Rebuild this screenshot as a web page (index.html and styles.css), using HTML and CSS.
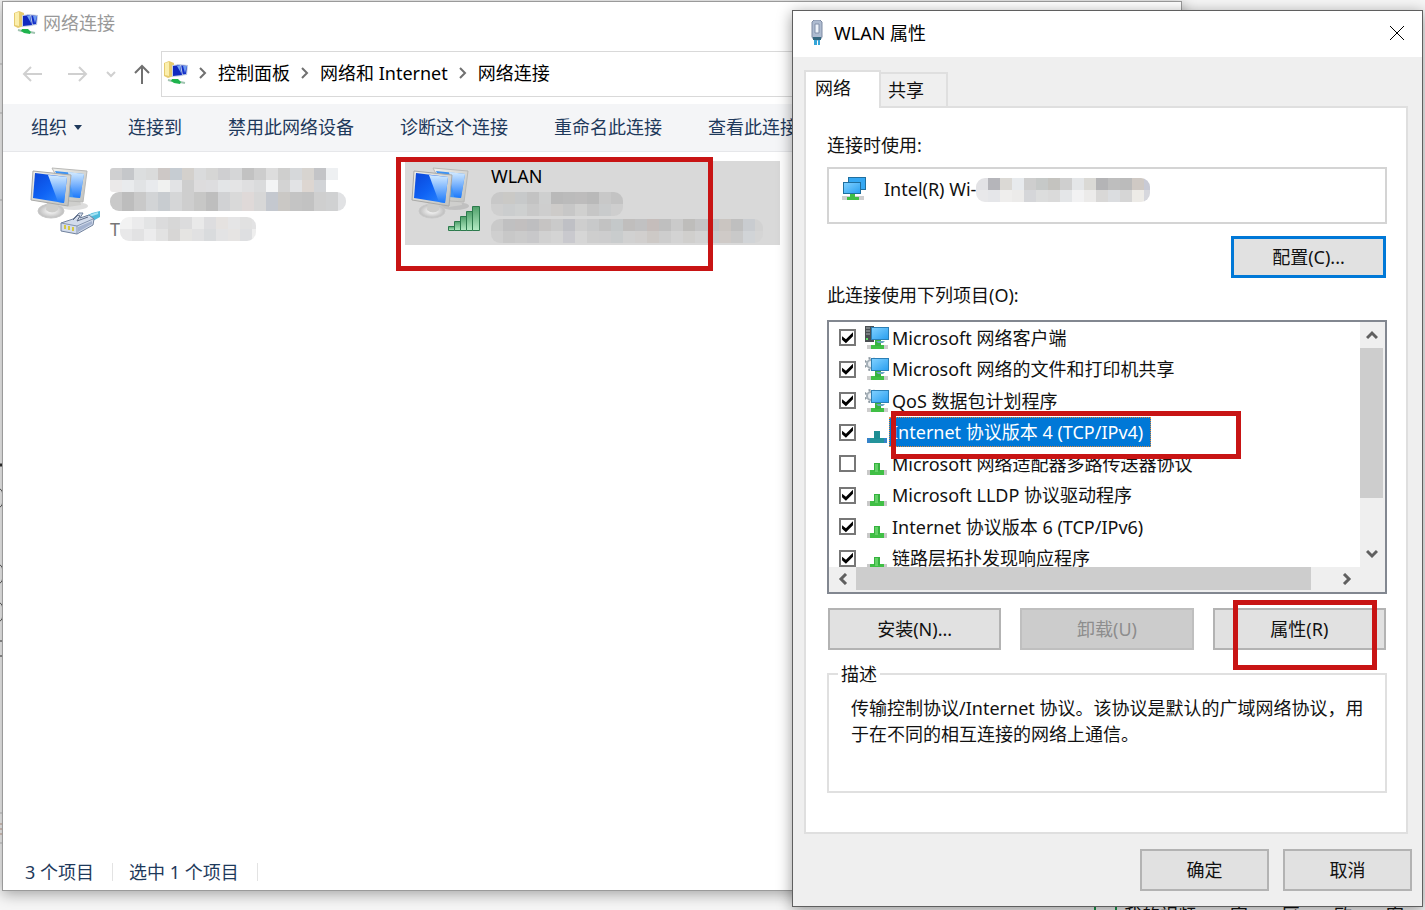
FILE: index.html
```
<!DOCTYPE html>
<html lang="zh-CN">
<head>
  <meta charset="UTF-8">
  <meta name="viewport" content="width=device-width, initial-scale=1.0">
  <title>网络连接</title>
  <link rel="stylesheet" href="styles.css">
</head>
<body>
  <!-- Icônes communes -->
  <svg class="defs" width="0" height="0" aria-hidden="true">
    <defs>
      <linearGradient id="screen" x1="0" y1="0" x2="1" y2="1">
        <stop offset="0" stop-color="#0b45d8"/>
        <stop offset="0.5" stop-color="#0f63f5"/>
        <stop offset="1" stop-color="#2f8cff"/>
      </linearGradient>
      <linearGradient id="glare" x1="0" y1="0" x2="0" y2="1">
        <stop offset="0" stop-color="#d4ebff"/>
        <stop offset="1" stop-color="#1a78fb"/>
      </linearGradient>
      <linearGradient id="frame" x1="0" y1="0" x2="1" y2="1">
        <stop offset="0" stop-color="#f0f0ec"/>
        <stop offset="1" stop-color="#bfc0bd"/>
      </linearGradient>
      <linearGradient id="sky" x1="0" y1="0" x2="1" y2="1">
        <stop offset="0" stop-color="#7fd0ff"/>
        <stop offset="1" stop-color="#2ba0f0"/>
      </linearGradient>
      <linearGradient id="bars" x1="0" y1="0" x2="0" y2="1">
        <stop offset="0" stop-color="#4fa06a"/>
        <stop offset="1" stop-color="#b4ecc4"/>
      </linearGradient>
      <radialGradient id="foot">
        <stop offset="0" stop-color="#ffffff"/>
        <stop offset="1" stop-color="#bdbdbd"/>
      </radialGradient>
      <symbol id="monitors" viewBox="0 0 60 56">
        <ellipse cx="44" cy="39" rx="14" ry="4" fill="#777" opacity="0.25"/>
        <path d="M38 32l12 1 1 5-13 2z" fill="#cfcfcd"/>
        <path d="M22 1l35 3-4 31-14-1z" fill="url(#frame)" stroke="#b9b9b7"/>
        <path d="M25 4l29 3-4 24-12-1z" fill="#3d93f5"/>
        <path d="M38 5l16 2-4 24-7-1z" fill="url(#glare)"/>
        <ellipse cx="21" cy="44" rx="13" ry="7" fill="url(#foot)" stroke="#c9c9c9"/>
        <path d="M17 34l11 3 0 6q-6 5-12 0z" fill="#cdcdcb"/>
        <path d="M3 4l38 4-3 31-37-6z" fill="url(#frame)" stroke="#a9a9a7"/>
        <path d="M5 6l32 4-3 26L3 31z" fill="url(#screen)"/>
        <path d="M18 8l19 2-3 26-6-1z" fill="url(#glare)"/>
      </symbol>
      <symbol id="folder-net" viewBox="0 0 24 24">
        <path d="M0 2l5-2 5 2v13l-6 2-4-2z" fill="#e6cb6f"/>
        <path d="M1 2l4-1v14l-4-1z" fill="#fbefad"/>
        <path d="M13 3l11 1-1 10-10 1z" fill="#b9c6df"/>
        <path d="M14 4l9 1-1 8-8 1z" fill="#1531c9"/>
        <path d="M8 4l9-1 2 12-11 1z" fill="#c4cfe6"/>
        <path d="M9 5l7-1 2 10-9 1z" fill="#1029c0"/>
        <path d="M13 5l3-1 1 8z" fill="#72a3f4"/>
        <path d="M19 5h4l-2 7z" fill="#6f9cf1"/>
        <path d="M4 19l4 1M16 21l5 1" stroke="#a0c4b0" stroke-width="2"/>
        <path d="M8 18l6 0 3 3-1 2-6-1-3-2z" fill="#1fb34d"/>
      </symbol>
      <symbol id="proto" viewBox="0 0 24 24">
        <path d="M2 18h20v5H2z" fill="#c9c9c9"/>
        <path d="M5 18h14v5H5z" fill="#40bf45"/>
        <path d="M9 11h6v8H9z" fill="#35b23e"/>
        <path d="M10 12h3v8h-3z" fill="#63d167"/>
      </symbol>
      <symbol id="proto-on" viewBox="0 0 24 24">
        <path d="M2 18h20v5H2z" fill="#3583c9"/>
        <path d="M5 18h14v5H5z" fill="#23949b"/>
        <path d="M9 11h6v8H9z" fill="#1e8e93"/>
      </symbol>
      <symbol id="pc" viewBox="0 0 24 24">
        <path d="M2 19h21v4H2z" fill="#cdcdcd"/>
        <path d="M6 19h13v4H6z" fill="#40bf45"/>
        <path d="M10 14h6v6h-6z" fill="#37b43f"/>
        <path d="M6 1h18v13H6z" fill="#2b7fb5"/>
        <path d="M7 2h16v11H7z" fill="url(#sky)"/>
        <path d="M11 15h9l-2 2h-5z" fill="#69a6bd"/>
      </symbol>
      <symbol id="client" viewBox="0 0 24 24">
        <path d="M0 0h9v16H0z" fill="#4a4f52"/>
        <path d="M1 2h4M1 5h4M1 8h4" stroke="#a8b0b2"/>
        <path d="M1 12h2v2H1z" fill="#5fe36b"/>
        <use href="#pc"/>
      </symbol>
      <symbol id="service" viewBox="0 0 24 24">
        <circle cx="6" cy="7" r="4" fill="#e9edf0" stroke="#a4afb7" stroke-width="2"/>
        <circle cx="6" cy="7" r="6" fill="none" stroke="#8c98a1" stroke-width="2" stroke-dasharray="2 3"/>
        <use href="#pc"/>
      </symbol>
      <symbol id="crumb" viewBox="0 0 8 12">
        <path d="M1 1l5 5-5 5" fill="none" stroke="#707070" stroke-width="2"/>
      </symbol>
      <symbol id="chev" viewBox="0 0 12 12">
        <path d="M1 9l5-5 5 5" fill="none" stroke="#606060" stroke-width="3"/>
      </symbol>
    </defs>
  </svg>

  <!-- Ce qui dépasse derrière les fenêtres -->
  <svg class="left-edge" width="3" height="910" aria-hidden="true">
    <path d="M0 64h3M0 113h3M0 200h3M0 813h3M0 843h3" stroke="#bbb"/>
    <path d="M0 465h3" stroke="#333" stroke-width="3"/>
    <path d="M0 489q3 1 3 9t-3 9M0 565q3 1 3 9t-3 9M0 603q3 1 3 9t-3 9" fill="none" stroke="#555"/>
    <path d="M0 641h3M0 656h3" stroke="#333"/>
    <path d="M0 824h3M0 829h3M0 834h3" stroke="#c09a8a"/>
  </svg>
  <div class="behind">
    <span class="play"></span>
    <span>我的视频</span><span>字</span><span>区</span><span>欧</span><span>客</span>
  </div>

  <!-- Fenêtre principale -->
  <main class="window explorer">
    <header class="title-bar">
      <svg class="icon-24"><use href="#folder-net"/></svg>
      <span>网络连接</span>
    </header>

    <nav class="nav-row">
      <button class="nav-btn" aria-label="后退"><svg width="20" height="16"><path d="M20 8H2M9 1L2 8l7 7" fill="none" stroke="#d0d0d0" stroke-width="2"/></svg></button>
      <button class="nav-btn" aria-label="前进"><svg width="20" height="16"><path d="M0 8h18M11 1l7 7-7 7" fill="none" stroke="#d0d0d0" stroke-width="2"/></svg></button>
      <button class="nav-btn small" aria-label="最近"><svg width="10" height="8"><path d="M1 2l4 4 4-4" fill="none" stroke="#d0d0d0" stroke-width="2"/></svg></button>
      <button class="nav-btn" aria-label="上移"><svg width="16" height="20"><path d="M8 20V2M1 9l7-7 7 7" fill="none" stroke="#707070" stroke-width="2"/></svg></button>
      <div class="address">
        <svg class="icon-24"><use href="#folder-net"/></svg>
        <svg class="crumb"><use href="#crumb"/></svg>
        <a href="#">控制面板</a>
        <svg class="crumb"><use href="#crumb"/></svg>
        <a href="#">网络和 Internet</a>
        <svg class="crumb"><use href="#crumb"/></svg>
        <a href="#">网络连接</a>
      </div>
    </nav>

    <div class="toolbar">
      <button>组织<i class="caret"></i></button>
      <button>连接到</button>
      <button>禁用此网络设备</button>
      <button>诊断这个连接</button>
      <button>重命名此连接</button>
      <button>查看此连接的状态</button>
    </div>

    <section class="connections">
      <article class="connection">
        <div class="conn-icon">
          <svg class="monitors"><use href="#monitors"/></svg>
          <svg class="overlay plug" viewBox="0 0 40 26">
            <path d="M26 6l6-3 8-2v6l-9 5z" fill="#4fbbdb"/>
            <path d="M29 6l9-3" stroke="#a5e2f2" stroke-width="2"/>
            <path d="M1 13l12-4 6-6 4 0-3 5 9-3 5 4-1 6-16 9-16-3z" fill="#d3dcec" stroke="#71829d"/>
            <path d="M1 13l16 3 16-7M17 16v8" fill="none" stroke="#8595b0"/>
            <path d="M18 17l14-6v3l-14 8z" fill="#a3b2cf"/>
            <path d="M4 15h2v4H4zM8 16h2v4H8zM12 17h2v4h-2z" fill="#d6c843"/>
            <path d="M13 10l5-5 2 1-3 5 11-4" fill="none" stroke="#5d6b85"/>
          </svg>
        </div>
        <div class="conn-text">
          <svg class="mosaic wide" data-width="230" data-top="#d0d0d1 #c5c7ca #dcdedf #dadbdb #cdc8c6 #c6ccd2 #d3d0cc #dadbdc #d6d6d5 #cfcfd1 #d5d6d7 #c2c2c2 #cdcdcd #dddddd #cfcfce #d6d8da #d7d4d0 #c3c4c7 #eef0f2" data-bottom="#ebe9e9 #e9ebed #e1e3e5 #e8eaed #f0f1f0 #e2e3e5 #cecece #dddcdd #dddddf #e3e5e7 #e4e4e5 #dfdfe0 #dadbdc #f3f4f5 #d3d3d3 #e2e3e5 #ddd6d1 #d2d4d7 #ffffff"></svg>
          <svg class="mosaic" data-width="236" data-top="#c9c9c9 #bdbdbd #c9c9c9 #d2d4d6 #c8ccd0 #d5d6d7 #cecece #c7c7c6 #bebebe #d1d2d4 #d9d9d9 #dfd9d8 #d7d7d7 #c4c8cf #cac8c5 #c4c4c4 #c2c2c2 #cfcfcf #d0d1d2 #e1e2e4"></svg>
          <span class="conn-sub">T<svg class="mosaic" data-width="136" data-top="#f2f2f2 #ebebec #e3e4e5 #dbdbdc #d7d7d7 #dcdcdd #e9e9e9 #dddddf #e5e2e0 #e5e5e6 #e1e1e1 #e3e3e4" data-bottom="#e8e8e9 #e2e2e3 #ececed #e2e2e2 #d7d6d5 #e5e4e2 #e1e1e2 #d9dbdd #e3e3e4 #e6e4e3 #dedfe1 #eeeeee"></svg></span>
        </div>
      </article>

      <article class="connection selected">
        <div class="conn-icon">
          <svg class="monitors"><use href="#monitors"/></svg>
          <svg class="overlay signal" viewBox="0 0 32 25" fill="url(#bars)" stroke="#2d7a4d">
            <path d="M0.5 20.500h6v4h-6z"/>
            <path d="M6.500 15.500h6v9h-6z"/>
            <path d="M12.500 10.500h6v14h-6z"/>
            <path d="M18.500 5.500h6v19h-6z"/>
            <path d="M24.500 0.500h7v24h-7z"/>
          </svg>
        </div>
        <div class="conn-text">
          <span>WLAN</span>
          <svg class="mosaic" data-width="132" data-top="#c8c8c8 #cac9c6 #c7c9ca #c3c3c3 #cecfcf #b9b9b9 #bbbbbb #bdbcbc #b9b9b9 #c8c8c8 #c3c3c3" data-bottom="#cfcfcf #cbcdce #ced0d0 #c9c9c9 #cecece #cdcbc9 #c7c7c7 #d0d0cf #c6c6c6 #c9cbcc #cecece"></svg>
          <svg class="mosaic" data-width="272" data-top="#cacaca #c0c0c1 #c2bfbf #bebec0 #c6c4c3 #cacaca #bfc0c5 #cecece #c8c9ca #c2c2c2 #c4c8c9 #c0bebd #c1c1c2 #c5bdbb #bfbfbf #cacaca #bebdbb #c4c4c5 #c1c3c6 #cac5c1 #bfbfbf #c9ccd0 #d2d2d2" data-bottom="#cfcfcf #c8c8c8 #cbcbcb #c8c8ca #d1d1d1 #d4d4d4 #c9c9ce #d6d6d6 #cecece #cdcdce #c9cccd #d1d1d1 #d1cfce #cdc9c6 #cdcdcd #d3d3d3 #d0cfcd #d3d3d3 #c9cbcd #cfcac7 #c9c9c9 #d1d4d7 #d5d5d5"></svg>
        </div>
      </article>
    </section>

    <footer class="status-bar">
      <span>3 个项目</span>
      <span>选中 1 个项目</span>
    </footer>
  </main>

  <!-- Boîte de dialogue WLAN -->
  <div class="window dialog" role="dialog" aria-labelledby="dialog-title">
    <header class="dialog-title">
      <svg width="14" height="26" viewBox="0 0 14 26">
        <path d="M2 2l2-2h6l2 2v15l-2 3H4l-2-3z" fill="#aebbd0" stroke="#7e8ba3"/>
        <path d="M5 4h4v9H5z" fill="#eef3fa" stroke="#8290aa"/>
        <path d="M3 17h8v3H3z" fill="#33677f"/>
        <path d="M4 20h3v5H4zM8 20h2v5H8z" fill="#35a5d8"/>
      </svg>
      <span id="dialog-title">WLAN 属性</span>
      <button class="close" aria-label="关闭"><svg width="16" height="16"><path d="M1 1l14 14M15 1L1 15" stroke="#000"/></svg></button>
    </header>

    <div class="dialog-body">
      <div class="tabs" role="tablist">
        <button class="tab active" role="tab" aria-selected="true">网络</button>
        <button class="tab" role="tab" aria-selected="false">共享</button>
      </div>

      <div class="panel" role="tabpanel">
        <p class="label">连接时使用:</p>
        <div class="adapter">
          <svg width="25" height="25" viewBox="0 0 25 25">
            <path d="M7 1h18v13H7z" fill="#1f6f9f"/><path d="M8 2h16v11H8z" fill="#35a8f3"/>
            <path d="M1 20h22v4H1z" fill="#cfcfcf"/>
            <path d="M2 6h18v12H2z" fill="#1f6f9f"/><path d="M3 7h16v10H3z" fill="url(#sky)"/>
            <path d="M9 18h5v3h4v3H6v-3h3z" fill="#3fbe46"/>
          </svg>
          <span>Intel(R) Wi-</span>
          <svg class="mosaic" data-width="174" data-top="#e2e2e5 #b5b5ba #dbd9d5 #e7eaed #cecece #c6c9c8 #c4c3bf #cfcfcf #e4e6e8 #dad9d5 #b4b4b6 #bebebe #bbbbbb #cfc9c4 #c8cad5" data-bottom="#e8e8ea #e5e6e9 #efeeed #ecebea #d5d6d9 #dcdddd #dadada #e4e6e8 #f2f2f3 #ecebea #d9d8d7 #dbdde0 #d6d6d6 #edebe7 #d6d7dd"></svg>
        </div>
        <button class="btn configure">配置(C)...</button>

        <p class="label items-label">此连接使用下列项目(O):</p>
        <div class="list-box">
          <ul class="items">
            <li><input type="checkbox" id="i1" checked><svg class="icon-24"><use href="#client"/></svg><label for="i1">Microsoft 网络客户端</label></li>
            <li><input type="checkbox" id="i2" checked><svg class="icon-24"><use href="#service"/></svg><label for="i2">Microsoft 网络的文件和打印机共享</label></li>
            <li><input type="checkbox" id="i3" checked><svg class="icon-24"><use href="#service"/></svg><label for="i3">QoS 数据包计划程序</label></li>
            <li class="current"><input type="checkbox" id="i4" checked><svg class="icon-24"><use href="#proto-on"/></svg><label for="i4">Internet 协议版本 4 (TCP/IPv4)</label></li>
            <li><input type="checkbox" id="i5"><svg class="icon-24"><use href="#proto"/></svg><label for="i5">Microsoft 网络适配器多路传送器协议</label></li>
            <li><input type="checkbox" id="i6" checked><svg class="icon-24"><use href="#proto"/></svg><label for="i6">Microsoft LLDP 协议驱动程序</label></li>
            <li><input type="checkbox" id="i7" checked><svg class="icon-24"><use href="#proto"/></svg><label for="i7">Internet 协议版本 6 (TCP/IPv6)</label></li>
            <li><input type="checkbox" id="i8" checked><svg class="icon-24"><use href="#proto"/></svg><label for="i8">链路层拓扑发现响应程序</label></li>
          </ul>
          <div class="scroll-v">
            <svg class="chev"><use href="#chev"/></svg>
            <div class="thumb"></div>
            <svg class="chev down"><use href="#chev"/></svg>
          </div>
          <div class="scroll-h">
            <svg class="chev left"><use href="#chev"/></svg>
            <div class="thumb"></div>
            <svg class="chev right"><use href="#chev"/></svg>
          </div>
        </div>

        <div class="actions">
          <button class="btn">安装(N)...</button>
          <button class="btn" disabled>卸载(U)</button>
          <button class="btn">属性(R)</button>
        </div>

        <fieldset class="description">
          <legend>描述</legend>
          <p>传输控制协议/Internet 协议。该协议是默认的广域网络协议，用于在不同的相互连接的网络上通信。</p>
        </fieldset>
      </div>

      <div class="dialog-footer">
        <button class="btn">确定</button>
        <button class="btn">取消</button>
      </div>
    </div>
  </div>

  <!-- Cadres rouges -->
  <div class="marker marker-wlan"></div>
  <div class="marker marker-ipv4"></div>
  <div class="marker marker-props"></div>

  <script>
    // Dessine les zones pixelisées à partir des couleurs
    const NS = "http://www.w3.org/2000/svg";
    const cell = 12;

    document.querySelectorAll(".mosaic").forEach((svg) => {
      const rows = [svg.dataset.top, svg.dataset.bottom].filter(Boolean);
      svg.setAttribute("width", svg.dataset.width);
      svg.setAttribute("height", rows.length === 1 ? 19 : 24);
      rows.forEach((row, y) => {
        row.split(" ").forEach((color, x) => {
          const rect = document.createElementNS(NS, "rect");
          rect.setAttribute("x", x * cell);
          rect.setAttribute("y", y * cell);
          rect.setAttribute("width", cell);
          rect.setAttribute("height", rows.length === 1 ? 19 : cell);
          rect.setAttribute("fill", color);
          svg.appendChild(rect);
        });
      });
    });
  </script>
</body>
</html>
```
FILE: styles.css
```
/* Style global */
* {
  box-sizing: border-box;
}

body {
  margin: 0;
  height: 100vh;
  overflow: hidden;
  position: relative;
  background: #f6f6f6;
  font-family: "Noto Sans", "Noto Sans CJK SC", sans-serif;
  font-size: 18px;
  line-height: 26px;
  color: #111;
}

button {
  font: inherit;
  color: inherit;
  background: none;
  border: none;
  padding: 0;
  white-space: nowrap;
}

a {
  color: inherit;
  text-decoration: none;
}

p, ul {
  margin: 0;
  padding: 0;
}

svg {
  display: block;
  flex: none;
}

.defs {
  position: absolute;
}

.icon-24 {
  width: 24px;
  height: 24px;
}

.mosaic {
  border-radius: 9px;
}

.mosaic.wide {
  border-radius: 3px;
}

/* Arrière-plan */
.left-edge {
  position: absolute;
  left: 0;
  top: 0;
}

.behind {
  position: absolute;
  right: 21px;
  bottom: -18px;
  display: flex;
  gap: 34px;
}

.play {
  width: 23px;
  height: 24px;
  margin-right: -27px;
  border: 2px solid #1a9a4c;
}

/* Fenêtres */
.window {
  position: absolute;
  display: flex;
  flex-direction: column;
  background: white;
}

.explorer {
  left: 2px;
  right: 243px;
  top: 1px;
  bottom: 19px;
  border: 1px solid #9a9a9a;
  box-shadow: 0 3px 14px rgba(0, 0, 0, 0.35);
}

.title-bar {
  display: flex;
  align-items: center;
  gap: 5px;
  height: 43px;
  padding: 0 0 1px 11px;
  color: #999;
}

.nav-row {
  display: flex;
  align-items: center;
  height: 59px;
  padding: 0 0 1px 19px;
}

.nav-btn {
  display: flex;
  margin-right: 26px;
}

.nav-btn.small {
  margin: 0 18px 0 -8px;
}

.nav-btn:nth-child(4) {
  margin-right: 11px;
}

.address {
  flex: 1;
  display: flex;
  align-items: center;
  gap: 11px;
  height: 46px;
  margin-right: 12px;
  padding: 0 0 2px 2px;
  border: 1px solid #d9d9d9;
  color: #000;
}

.crumb {
  width: 8px;
  height: 12px;
}

.toolbar {
  display: flex;
  align-items: center;
  gap: 46px;
  height: 48px;
  padding: 0 0 2px 28px;
  background: #f4f5f7;
  border-bottom: 1px solid #e6e7ea;
  color: #1e395b;
  overflow: hidden;
}

.caret {
  display: inline-block;
  margin-left: 7px;
  vertical-align: 4px;
  border: 4px solid transparent;
  border-top: 5px solid #1e395b;
  border-bottom: none;
}

.connections {
  flex: 1;
  display: flex;
  align-items: flex-start;
  gap: 6px;
  padding: 9px 21px;
}

.connection {
  display: flex;
  gap: 10px;
  width: 375px;
  height: 84px;
  padding: 2px 6px;
}

.connection.selected {
  background: #d9d9d9;
  color: #000;
}

.conn-icon {
  position: relative;
  width: 70px;
}

.monitors {
  width: 60px;
  height: 56px;
  margin-top: 4px;
}

.overlay {
  position: absolute;
}

.plug {
  right: 0;
  bottom: 7px;
  width: 40px;
  height: 26px;
}

.signal {
  right: 1px;
  bottom: 12px;
  width: 32px;
  height: 25px;
}

.conn-text {
  display: flex;
  flex-direction: column;
  gap: 3px;
}

.connection:first-child .conn-text {
  padding-top: 5px;
  gap: 0;
}

.conn-sub {
  display: flex;
  align-items: center;
  padding-top: 5px;
  color: #777;
}

/* Barre d'état */
.status-bar {
  display: flex;
  align-items: center;
  height: 37px;
  padding-left: 22px;
  color: #1e395b;
}

.status-bar span {
  padding-right: 18px;
  margin-right: 16px;
  line-height: 18px;
  border-right: 1px solid #e3e3e3;
}

/* Boîte de dialogue */
.dialog {
  left: 792px;
  right: 2px;
  top: 10px;
  bottom: 3px;
  border: 1px solid #5f5f5f;
  background: #efefef;
  box-shadow: 0 3px 14px rgba(0, 0, 0, 0.4);
}

.dialog-title {
  display: flex;
  align-items: center;
  gap: 10px;
  height: 46px;
  padding: 0 17px 2px;
  background: white;
  color: #000;
}

.close {
  margin-left: auto;
}

.dialog-body {
  flex: 1;
  display: flex;
  flex-direction: column;
  padding: 13px 14px 15px 11px;
}

.tabs {
  display: flex;
  align-items: flex-end;
}

.tab {
  height: 34px;
  width: 67px;
  padding: 0 0 0 7px;
  text-align: left;
  border: 2px solid #dfdfdf;
  border-left: none;
  border-bottom: none;
}

.tab.active {
  position: relative;
  width: 77px;
  height: 38px;
  padding: 0 0 4px 9px;
  margin-bottom: -2px;
  background: white;
  border-left: 2px solid #dfdfdf;
}

.panel {
  flex: 1;
  display: flex;
  flex-direction: column;
  padding: 24px 19px 0 21px;
  background: white;
  border: 2px solid #dfdfdf;
}

.adapter {
  display: flex;
  height: 57px;
  margin-top: 9px;
  padding: 7px 12px;
  border: 2px solid #d4d4d4;
}

.adapter span {
  margin-left: 18px;
}

.adapter .mosaic {
  margin-top: 2px;
}

.btn {
  height: 42px;
  background: #e1e1e1;
  border: 2px solid #b3b3b3;
}

.btn:disabled {
  background: #ccc;
  border-color: #bfbfbf;
  color: #8d8d8d;
}

.configure {
  align-self: flex-end;
  width: 155px;
  margin: 12px 1px 0 0;
  border: 3px solid #0078d7;
}

.items-label {
  margin-top: 4px;
}

.list-box {
  display: grid;
  grid-template-columns: 1fr 25px;
  grid-template-rows: 245px 25px;
  height: 274px;
  margin-top: 12px;
  border: 2px solid #828790;
}

.items {
  display: grid;
  grid-auto-rows: 1fr;
  height: 252px;
  list-style: none;
  clip-path: inset(0 0 7px 0);
}

.items li {
  display: flex;
  align-items: center;
  padding-left: 10px;
}

.items input {
  appearance: none;
  width: 17px;
  height: 17px;
  margin: 0 9px 0 0;
  border: 2px solid #777;
  background: white;
}

.items input:checked::before {
  content: "";
  display: block;
  width: 13px;
  height: 13px;
  background: #000;
  clip-path: polygon(8% 38%, 38% 62%, 92% 8%, 92% 38%, 38% 92%, 8% 66%);
}

.items label {
  line-height: 30px;
  padding: 0 8px 0 3px;
}

.current label {
  background: #0078d7;
  color: white;
  outline: 1px dotted #e08a3c;
  outline-offset: -1px;
}

.scroll-v {
  display: flex;
  flex-direction: column;
  align-items: center;
  padding-right: 2px;
  background: #efefef;
}

.chev {
  width: 12px;
  height: 12px;
}

.scroll-v .chev {
  margin: 7px 0;
}

.scroll-v .thumb {
  width: 100%;
  height: 150px;
  background: #cdcdcd;
}

.scroll-v .down {
  margin-top: auto;
  transform: rotate(180deg);
}

.scroll-h {
  grid-column: 1 / 3;
  display: flex;
  align-items: center;
  padding: 0 32px 2px 8px;
  background: #efefef;
}

.scroll-h .thumb {
  flex: 1;
  height: 100%;
  margin: 0 30px 0 7px;
  background: #cdcdcd;
}

.left {
  transform: rotate(-90deg);
}

.right {
  transform: rotate(90deg);
}

.actions {
  display: flex;
  gap: 19px;
  margin: 14px 1px 0;
}

.actions .btn {
  flex: 1;
}

.description {
  height: 132px;
  margin: 11px 0 0;
  padding: 8px 16px 0 22px;
  border: 2px solid #e0e0e0;
}

.description legend {
  margin-left: -13px;
  padding: 0 3px;
}

.dialog-footer {
  display: flex;
  justify-content: flex-end;
  gap: 14px;
  margin: 15px -4px 0 0;
}

.dialog-footer .btn {
  width: 129px;
}

/* Cadres rouges */
.marker {
  position: absolute;
  border: 5px solid #c81414;
  pointer-events: none;
}

.marker-wlan {
  left: 396px;
  top: 157px;
  width: 317px;
  height: 114px;
}

.marker-ipv4 {
  left: 891px;
  top: 411px;
  width: 350px;
  height: 48px;
}

.marker-props {
  left: 1233px;
  top: 600px;
  width: 144px;
  height: 70px;
}
```
